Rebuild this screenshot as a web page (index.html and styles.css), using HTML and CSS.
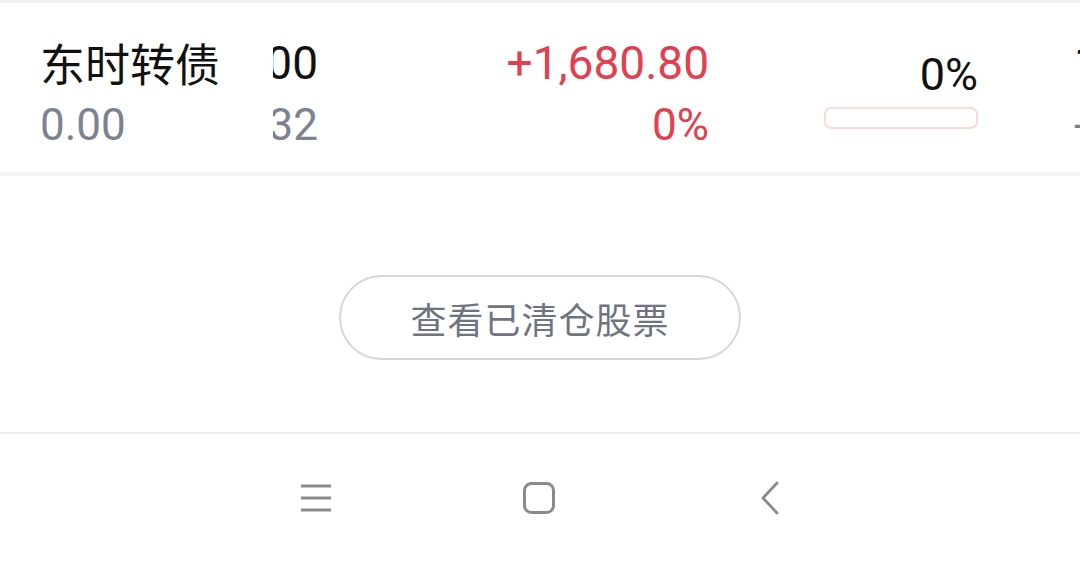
FILE: index.html
```html
<!DOCTYPE html>
<html lang="zh-CN">
  <head>
    <meta charset="UTF-8" />
    <title>持仓</title>
    <link rel="stylesheet" href="styles.css">
  </head>
  <body>
    <div class="top-gap"></div>

    <div class="position-row">
      <div class="cell name-cell">
        <div class="main">东时转债</div>
        <div class="sub">0.00</div>
      </div>
      <div class="cell clip-cell">
        <div class="main">100</div>
        <div class="sub">132</div>
      </div>
      <div class="cell profit-cell">
        <div class="main up">+1,680.80</div>
        <div class="sub up">0%</div>
      </div>
      <div class="cell ratio-cell">
        <div class="ratio-text">0%</div>
        <div class="ratio-bar"><span class="ratio-fill" style="width: 0%"></span></div>
      </div>
      <div class="cell edge-cell">
        <div class="main">1</div>
        <div class="sub">-</div>
      </div>
    </div>

    <div class="cleared">
      <button class="cleared-btn">查看已清仓股票</button>
    </div>

    <div class="nav-bar">
      <svg class="nav-icon" width="34" height="34" viewBox="0 0 34 34">
        <path d="M2 5 H32 M2 17 H32 M2 29 H32" stroke="#8a8a8a" stroke-width="3" fill="none" />
      </svg>
      <svg class="nav-icon" width="34" height="34" viewBox="0 0 34 34">
        <rect x="1.5" y="2.5" width="29" height="29" rx="7" stroke="#8a8a8a" stroke-width="3" fill="none" />
      </svg>
      <svg class="nav-icon" width="34" height="34" viewBox="0 0 34 34">
        <path d="M30 2 L16 17 L30 32" stroke="#8a8a8a" stroke-width="2.8" fill="none" stroke-linecap="round" stroke-linejoin="round" />
      </svg>
    </div>
  </body>
</html>
```

FILE: styles.css
```css
body {
  margin: 0;
  background: #fff;
  font-family: Roboto, "Noto Sans CJK SC", sans-serif;
  overflow: hidden;
}
.top-gap {
  height: 3px;
  background: #f1f1f2;
}
.position-row {
  display: flex;
  height: 169px;
  border-bottom: 4px solid #f2f2f3;
  overflow: hidden;
}
.cell {
  display: flex;
  flex-direction: column;
  flex-shrink: 0;
  padding-top: 28px;
  box-sizing: border-box;
}
.main {
  font-size: 46px;
  line-height: 64px;
  color: #111;
}
.sub {
  font-size: 44px;
  line-height: 60px;
  color: #7d8290;
}
.name-cell {
  width: 273px;
  padding-left: 40px;
}
.name-cell .main {
  font-family: "Noto Sans CJK SC", sans-serif;
  font-size: 45px;
}
.clip-cell {
  width: 45px;
  overflow: hidden;
  align-items: flex-end;
}
.profit-cell {
  width: 391px;
  align-items: flex-end;
}
.up {
  color: #e2404f;
}
.ratio-cell {
  width: 269px;
  align-items: flex-end;
  padding-top: 46px;
}
.ratio-text {
  font-size: 45px;
  line-height: 52px;
  color: #111;
}
.ratio-bar {
  width: 150px;
  height: 18px;
  margin-top: 6px;
  border: 2px solid #f8dcd4;
  border-radius: 7px;
  overflow: hidden;
}
.ratio-fill {
  display: block;
  height: 100%;
  background: #e2404f;
}
.edge-cell {
  padding-left: 96px;
}
.cleared {
  display: flex;
  justify-content: center;
  height: 258px;
  padding-top: 99px;
  box-sizing: border-box;
  border-bottom: 2px solid #ececed;
}
.cleared-btn {
  width: 402px;
  height: 85px;
  border: 2px solid #d3d6db;
  border-radius: 43px;
  background: #fff;
  color: #6f7482;
  font-family: "Noto Sans CJK SC", sans-serif;
  font-size: 36px;
  letter-spacing: 1px;
}
.nav-bar {
  display: flex;
  justify-content: center;
  align-items: center;
  gap: 190px;
  height: 128px;
}
```
